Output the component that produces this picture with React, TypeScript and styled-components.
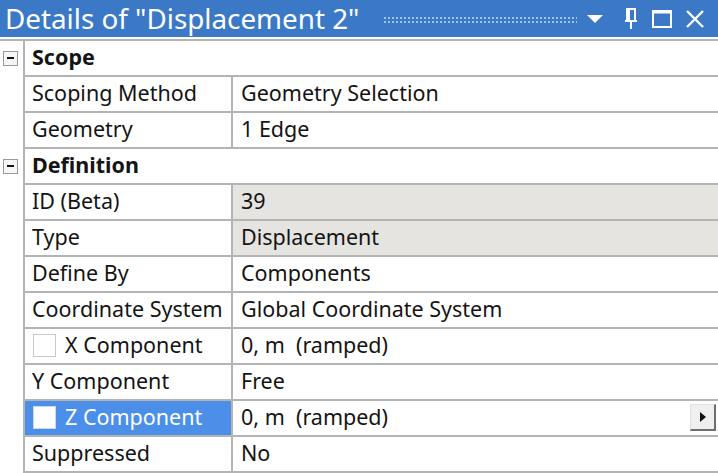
import React from "react";
import styled, { createGlobalStyle } from "styled-components";

const Global = createGlobalStyle`
  html, body { margin: 0; padding: 0; background: #ffffff; }
  body { font-family: "Noto Sans", "Open Sans", sans-serif; width: 718px; height: 473px; overflow: hidden; }
`;

const Panel = styled.div`
  width: 718px;
  height: 473px;
  display: flex;
  flex-direction: column;
  background: #ffffff;
`;

const TitleBar = styled.div`
  height: 37px;
  background: #3b78c5;
  display: flex;
  align-items: center;
  padding: 0 12px 0 5px;
  color: #ffffff;
  margin-bottom: 2px;
`;

const Title = styled.div`
  font-family: "Noto Sans", sans-serif;
  font-size: 27.8px;
  white-space: nowrap;
  line-height: 37px;
`;

const Grip = styled.div`
  flex: 1;
  height: 8px;
  margin: 2px 8px 0 24px;
  background-image: radial-gradient(circle, rgba(170, 200, 240, 0.9) 0.9px, transparent 1.1px);
  background-size: 4px 4px;
`;

const Tools = styled.div`
  display: flex;
  align-items: center;
  gap: 9px;
`;

const ToolIcon = styled.svg<{ $gapAfter?: number }>`
  display: block;
  margin-right: ${(p) => p.$gapAfter ?? 0}px;
`;

const Grid = styled.div`
  display: grid;
  grid-template-columns: 25px 208px 1fr;
  grid-auto-rows: 36px;
  border-top: 2px solid #b4b4b4;
`;

const Gutter = styled.div`
  display: flex;
  align-items: center;
  justify-content: center;
  border-right: 2px solid #b4b4b4;
`;

const Expander = styled.div`
  width: 13px;
  height: 13px;
  border: 1px solid #9a9a9a;
  display: flex;
  align-items: center;
  justify-content: center;
  background: #f6f6f6;
  margin-left: -2px;
  margin-top: -2px;
  &::after {
    content: "";
    width: 7px;
    height: 2px;
    background: #111;
  }
`;

const Cell = styled.div<{ $shade?: boolean; $sel?: boolean; $span?: boolean; $bold?: boolean; $right?: boolean }>`
  display: flex;
  align-items: center;
  padding-left: ${(p) => (p.$right ? "8px" : "7px")};
  padding-bottom: 3px;
  font-size: 21.5px;
  color: ${(p) => (p.$sel ? "#ffffff" : "#141414")};
  background: ${(p) => (p.$sel ? "#4b8fe8" : p.$shade ? "#e6e4e0" : "#ffffff")};
  border-bottom: 2px solid #b4b4b4;
  border-right: ${(p) => (p.$right || p.$span ? "none" : "2px solid #b4b4b4")};
  font-weight: ${(p) => (p.$bold ? 700 : 400)};
  grid-column: ${(p) => (p.$span ? "2 / 4" : "auto")};
  white-space: pre;
  box-sizing: border-box;
  position: relative;
`;

const Check = styled.span<{ $sel?: boolean }>`
  width: 21px;
  height: 21px;
  border: 1px solid ${(p) => (p.$sel ? "#c8d8f0" : "#c8c8c8")};
  background: #ffffff;
  margin-right: 9px;
  margin-left: 1px;
  margin-top: 2px;
  flex-shrink: 0;
`;

const DropBtn = styled.div`
  position: absolute;
  right: 2px;
  top: 3px;
  width: 26px;
  height: 27px;
  background: #efefef;
  border: 1px solid #e0e0e0;
  border-right: 2px solid #6e6e6e;
  border-bottom: 2px solid #6e6e6e;
  box-sizing: border-box;
  display: flex;
  align-items: center;
  justify-content: center;
  &::after {
    content: "";
    border-left: 6px solid #111;
    border-top: 5px solid transparent;
    border-bottom: 5px solid transparent;
  }
`;

type Row =
  | { kind: "group"; label: string }
  | { kind: "prop"; label: string; value: string; shade?: boolean; sel?: boolean; check?: boolean; drop?: boolean };

const rows: Row[] = [
  { kind: "group", label: "Scope" },
  { kind: "prop", label: "Scoping Method", value: "Geometry Selection" },
  { kind: "prop", label: "Geometry", value: "1 Edge" },
  { kind: "group", label: "Definition" },
  { kind: "prop", label: "ID (Beta)", value: "39", shade: true },
  { kind: "prop", label: "Type", value: "Displacement", shade: true },
  { kind: "prop", label: "Define By", value: "Components" },
  { kind: "prop", label: "Coordinate System", value: "Global Coordinate System" },
  { kind: "prop", label: "X Component", value: "0, m  (ramped)", check: true },
  { kind: "prop", label: "Y Component", value: "Free" },
  { kind: "prop", label: "Z Component", value: "0, m  (ramped)", check: true, sel: true, drop: true },
  { kind: "prop", label: "Suppressed", value: "No" },
];

export default function App() {
  return (
    <Panel>
      <Global />
      <TitleBar>
        <Title>Details of "Displacement 2"</Title>
        <Grip />
        <Tools>
          <ToolIcon width="20" height="20" viewBox="0 0 20 20" $gapAfter={8}>
            <path d="M2 6 L18 6 L10 14 Z" fill="#ffffff" />
          </ToolIcon>
          <ToolIcon width="18" height="24" viewBox="0 0 18 24" $gapAfter={2}>
            <path d="M5 2 H13 V14 H5 Z M7 2 V14 M3 14 H15 M9 14 V22" fill="none" stroke="#ffffff" strokeWidth="2" />
          </ToolIcon>
          <ToolIcon width="22" height="22" viewBox="0 0 22 22" $gapAfter={2}>
            <rect x="2" y="3" width="18" height="16" fill="none" stroke="#ffffff" strokeWidth="2" />
            <line x1="2" y1="4.5" x2="20" y2="4.5" stroke="#ffffff" strokeWidth="2" />
          </ToolIcon>
          <ToolIcon width="22" height="22" viewBox="0 0 22 22">
            <path d="M3 3 L19 19 M19 3 L3 19" stroke="#ffffff" strokeWidth="2.4" />
          </ToolIcon>
        </Tools>
      </TitleBar>
      <Grid>
        {rows.map((r, i) =>
          r.kind === "group" ? (
            <React.Fragment key={i}>
              <Gutter>
                <Expander />
              </Gutter>
              <Cell $span $bold>
                {r.label}
              </Cell>
            </React.Fragment>
          ) : (
            <React.Fragment key={i}>
              <Gutter />
              <Cell $sel={r.sel}>
                {r.check && <Check $sel={r.sel} />}
                {r.label}
              </Cell>
              <Cell $right $shade={r.shade}>
                {r.value}
                {r.drop && <DropBtn />}
              </Cell>
            </React.Fragment>
          )
        )}
      </Grid>
    </Panel>
  );
}
